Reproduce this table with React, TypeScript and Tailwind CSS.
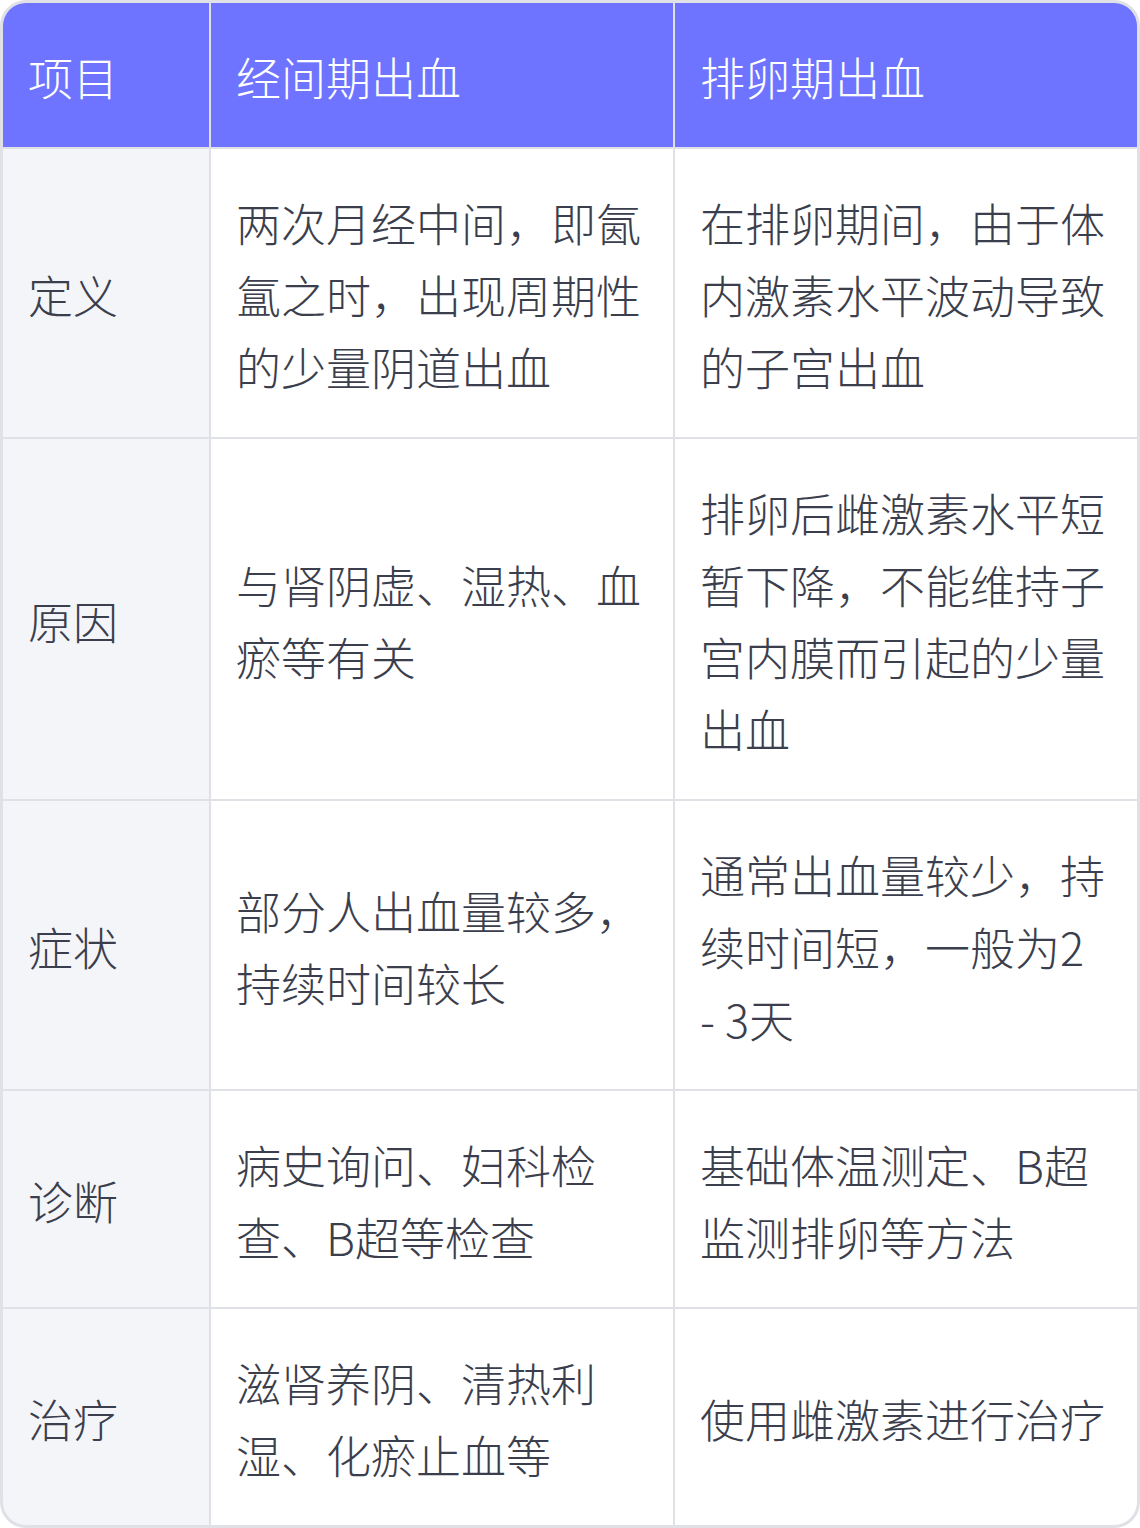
import React from 'react';

const rows: [string, string, string][] = [
  ['定义', '两次月经中间，即氤氲之时，出现周期性的少量阴道出血', '在排卵期间，由于体内激素水平波动导致的子宫出血'],
  ['原因', '与肾阴虚、湿热、血瘀等有关', '排卵后雌激素水平短暂下降，不能维持子宫内膜而引起的少量出血'],
  ['症状', '部分人出血量较多，持续时间较长', '通常出血量较少，持续时间短，一般为2 - 3天'],
  ['诊断', '病史询问、妇科检查、B超等检查', '基础体温测定、B超监测排卵等方法'],
  ['治疗', '滋肾养阴、清热利湿、化瘀止血等', '使用雌激素进行治疗'],
];

const cell = 'flex items-center pl-[25px] pr-[30px] pt-[38px] pb-[34px] text-[45px] leading-[72px] font-light break-all';

export default function App() {
  return (
    <div className="w-[1140px] h-[1528px] bg-white font-['Noto_Sans_CJK_SC',sans-serif]">
      <div className="grid grid-cols-[206px_462px_462px] gap-[2px] border-[3px] border-[#e0e1e7] bg-[#e0e1e7] rounded-[26px] overflow-hidden">
        <div className={`${cell} bg-[#6e74ff] text-white`}>项目</div>
        <div className={`${cell} bg-[#6e74ff] text-white`}>经间期出血</div>
        <div className={`${cell} bg-[#6e74ff] text-white`}>排卵期出血</div>
        {rows.map(([label, a, b]) => (
          <React.Fragment key={label}>
            <div className={`${cell} bg-[#f4f5f9] text-[#3b3e4c]`}>{label}</div>
            <div className={`${cell} bg-white text-[#3b3e4c]`}>{a}</div>
            <div className={`${cell} bg-white text-[#3b3e4c]`}>{b}</div>
          </React.Fragment>
        ))}
      </div>
    </div>
  );
}
